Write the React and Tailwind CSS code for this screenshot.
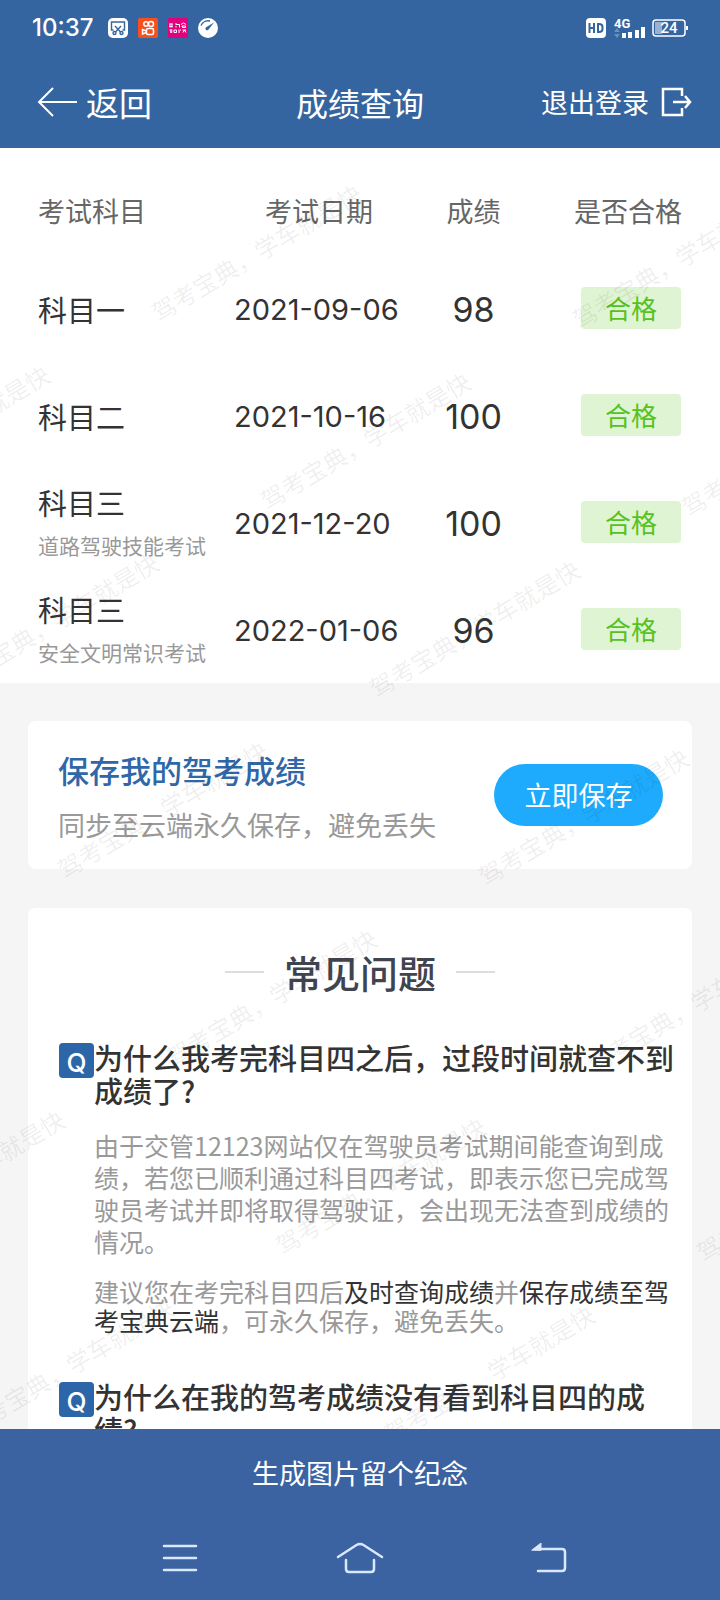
import React from 'react';

const RESULTS = [
  { subject: '科目一', date: '2021-09-06', score: 98 },
  { subject: '科目二', date: '2021-10-16', score: 100 },
  { subject: '科目三', note: '道路驾驶技能考试', date: '2021-12-20', score: 100 },
  { subject: '科目三', note: '安全文明常识考试', date: '2022-01-06', score: 96 },
];

// watermark grid: each row shifts right, each column drops a little
const WATERMARKS = [];
for (let row = 0; row < 7; row++) {
  for (let col = -2; col < 2; col++) {
    const left = 161 + row * 109 + col * 421;
    // skip the ones that would sit fully outside the screen
    if (left > -210 && left < 720) WATERMARKS.push({ left, top: 149 + row * 188 + col * 7 });
  }
}

export default function App() {
  return (
    <div className="flex h-screen flex-col overflow-hidden bg-[#f5f5f5] font-['Noto_Sans_CJK_SC',sans-serif] text-[#333]">
      <header className="shrink-0 bg-[#3565a0] text-white">
        <StatusBar />
        <div className="grid h-[92px] grid-cols-[1fr_auto_1fr] items-center px-7">
          <button type="button" className="ml-[9px] flex items-center gap-[9px] justify-self-start text-[33px] leading-[48px]">
            <svg width="40" height="30" viewBox="0 0 40 30" fill="none" stroke="currentColor" strokeWidth="2">
              <path d="M16 1 2 15l14 14M2 15h38" />
            </svg>
            返回
          </button>
          <h1 className="text-[32px] leading-[48px]">成绩查询</h1>
          <button type="button" className="flex items-center gap-[12px] justify-self-end text-[27px] leading-[48px]">
            退出登录
            <svg width="31" height="30" viewBox="0 0 31 30" fill="none" stroke="currentColor" strokeWidth="2.500">
              <path d="M21 9V2H2v26h19v-7M12 15h17M24 9l5 6-5 6" />
            </svg>
          </button>
        </div>
      </header>

      <main className="relative min-h-0 flex-1 overflow-x-hidden overflow-y-auto [scrollbar-width:none]">
        <ResultTable />
        <section className="mx-7 mt-[38px] flex h-[148px] items-center justify-between rounded-lg bg-white pr-[29px] pl-[30px]">
          <div className="pt-[3px]">
            <h2 className="text-[31px] leading-[55px] font-medium text-[#2f67a8]">保存我的驾考成绩</h2>
            <p className="text-[27px] leading-[55px] text-[#999]">同步至云端永久保存，避免丢失</p>
          </div>
          <button type="button" className="h-[62px] w-[169px] rounded-full bg-[#1eabfd] text-[27px] text-white">
            立即保存
          </button>
        </section>
        <Faq />
        <Watermark />
      </main>

      <footer className="shrink-0 bg-[#3b63a1] text-white">
        <button type="button" className="block h-[88px] w-full text-[27px]">
          生成图片留个纪念
        </button>
        <SystemNav />
      </footer>
    </div>
  );
}

function StatusBar() {
  return (
    <div className="flex h-14 items-center justify-between px-[32px]">
      <div className="flex items-center gap-[10px]">
        <span className="mr-[4px] font-['Inter',sans-serif] text-[24px] leading-8 font-medium">10:37</span>
        <svg width="20" height="20" viewBox="0 0 20 20">
          <rect width="20" height="20" rx="5" fill="#fff" />
          <g fill="none" stroke="#3565a0" strokeWidth="1.400">
            <path d="M5.500 12H3.500V4h13v8h-2" />
            <path d="m7 8 5.500 6M13 8l-5.500 6" />
            <circle cx="6.500" cy="15" r="1.500" />
            <circle cx="13.500" cy="15" r="1.500" />
          </g>
        </svg>
        <svg width="20" height="20" viewBox="0 0 20 20">
          <rect width="20" height="20" rx="2" fill="#f4511e" />
          <g fill="none" stroke="#fff" strokeWidth="1.500">
            <circle cx="8" cy="6" r="2.200" />
            <circle cx="13" cy="6" r="2.500" />
            <rect x="8.500" y="10.500" width="7" height="6" rx="1.500" />
            <path d="m8.500 13-4-1.500v4.500l4-1.500" />
          </g>
        </svg>
        <svg width="20" height="20" viewBox="0 0 20 20">
          <rect width="20" height="20" rx="1" fill="#e2007f" />
          <g fill="none" stroke="#fff" strokeWidth="1">
            <path d="M1.500 6h3M1.500 8.500h3M2 5.500v4M4 5.500v4M7.500 6.500h4v3M8 5v1M8 8v1.500M13 6.500l2.500-1.500L18 6.500M14 8h3.500v1.500h-3z" />
            <path d="M1.500 12h3M2 14h2.500M3 11.500V15M6 12h2.500v2.500H6zM11 11.500V15M12 12h1M14.500 12h3.500M15 14.500l1.500-2.500 1.500 2.500" />
          </g>
        </svg>
        <svg width="20" height="20" viewBox="0 0 20 20">
          <circle cx="10" cy="10" r="10" fill="#fff" />
          <path d="M3 7.500a8 8 0 0 1 9-4.500" fill="none" stroke="#3565a0" strokeWidth="1.400" />
          <path d="m16 4.500-7.500 4.500a1.700 1.700 0 1 0 2.200 2.200z" fill="#3565a0" />
        </svg>
      </div>

      <div className="flex items-center gap-[6px]">
        <svg width="20" height="20" viewBox="0 0 20 20">
          <rect width="20" height="20" rx="4" fill="#fff" />
          <path d="M3.500 5v10M8 5v10M3.500 10H8M12 6v8h1q3.500 0 3.500-3V9q0-3-3.500-3z" fill="none" stroke="#3565a0" strokeWidth="2" />
        </svg>
        <svg width="32" height="22" viewBox="0 0 32 22" className="ml-[2px]">
          <text x="0" y="11" fill="#fff" fontFamily="Roboto" fontWeight="700" fontSize="13">4G</text>
          <path d="m0 15 3-4 3 4zM0 17l3 4 3-4z" fill="#6a90c0" />
          <path d="M10 21v-5M16 21v-6M23 21v-8M29 21V10" stroke="#fff" strokeWidth="4" />
        </svg>
        <svg width="36" height="20" viewBox="0 0 36 20">
          <rect x="1" y="2" width="32" height="16" rx="3" fill="none" stroke="#fff" strokeWidth="1.500" />
          <rect x="3" y="4" width="7" height="12" fill="#fff" opacity="0.500" />
          <path d="M35 8v4" stroke="#fff" strokeWidth="2" />
          <text x="17" y="15" fill="#fff" textAnchor="middle" fontFamily="Roboto" fontWeight="500" fontSize="15">24</text>
        </svg>
      </div>
    </div>
  );
}

function ResultTable() {
  return (
    <table className="w-full table-fixed border-collapse bg-white">
      <thead>
        <tr className="h-[107px] text-[27px] leading-[40px] text-[#666]">
          <th className="pt-[18px] pl-[38px] text-left font-normal">考试科目</th>
          <th className="w-[200px] pt-[18px] font-normal">考试日期</th>
          <th className="w-[109px] pt-[18px] font-normal">成绩</th>
          <th className="w-[192px] pt-[18px] pr-[38px] text-right font-normal">是否合格</th>
        </tr>
      </thead>
      <tbody>
        {RESULTS.map((r) => (
          <tr key={r.date} className="h-[107px]">
            <td className="pl-[38px] whitespace-nowrap">
              <div className="text-[29px] leading-[44px]">{r.subject}</div>
              {r.note && <div className="text-[21px] leading-[42px] text-[#999]">{r.note}</div>}
            </td>
            <td className="pt-[2px] pl-[15px] font-['Inter',sans-serif] text-[29px] whitespace-nowrap">{r.date}</td>
            <td className="pt-[2px] text-center font-['Inter',sans-serif] text-[34px]">{r.score}</td>
            <td className="pr-[39px] pb-[2px]">
              <span className="ml-auto block w-[100px] rounded bg-[#dff4d2] text-center text-[26px] leading-[42px] text-[#56c222]">
                合格
              </span>
            </td>
          </tr>
        ))}
      </tbody>
    </table>
  );
}

function Faq() {
  return (
    <section className="mx-7 mt-[39px] rounded-lg bg-white pt-[34px] pr-[12px] pb-10 pl-[31px]">
      <div className="mr-[19px] mb-[39px] flex items-center justify-center gap-[20px]">
        <span className="h-[2px] w-[39px] bg-[#ddd]" />
        <h2 className="text-[38px] leading-[60px] font-medium text-[#40444f]">常见问题</h2>
        <span className="h-[2px] w-[39px] bg-[#ddd]" />
      </div>

      <Question title="为什么我考完科目四之后，过段时间就查不到成绩了?">
        <p className="mt-[22px] leading-[32px]">
          由于交管12123网站仅在驾驶员考试期间能查询到成绩，若您已顺利通过科目四考试，即表示您已完成驾驶员考试并即将取得驾驶证，会出现无法查到成绩的情况。
        </p>
        <p className="mt-[20px] leading-[29px]">
          建议您在考完科目四后<b className="font-normal text-[#333]">及时查询成绩</b>并
          <b className="font-normal text-[#333]">保存成绩至驾考宝典云端</b>，可永久保存，避免丢失。
        </p>
      </Question>
      <Question title="为什么在我的驾考成绩没有看到科目四的成绩?" />
    </section>
  );
}

function Question({ title, children }) {
  return (
    <div className="mb-[45px] flex items-start">
      <span className="mt-[2px] h-[35px] w-[35px] shrink-0 rounded bg-[#2c66a8] pt-[2px] text-center font-['Inter',sans-serif] text-[26px] leading-[35px] font-medium text-white">
        Q
      </span>
      <div className="flex-1 text-[25px] text-[#999]">
        <h3 className="text-[29px] leading-[33px] font-medium text-[#333]">{title}</h3>
        {children}
      </div>
    </div>
  );
}

function Watermark() {
  return (
    <div aria-hidden="true" className="pointer-events-none absolute inset-0 overflow-hidden select-none">
      {WATERMARKS.map((w, i) => (
        <span
          key={i}
          className="absolute origin-bottom-left -rotate-31 text-[24px] leading-[30px] whitespace-nowrap text-black/7"
          style={{ left: w.left, top: w.top }}
        >
          驾考宝典，学车就是快
        </span>
      ))}
    </div>
  );
}

function SystemNav() {
  return (
    <nav className="grid h-[83px] grid-cols-3 place-items-center px-[90px] pb-[2px] text-[#dbe6ff]">
      <button type="button" aria-label="菜单">
        <svg width="36" height="30" viewBox="0 0 36 30" stroke="currentColor" strokeWidth="2.500" strokeLinecap="round">
          <path d="M2 3h32M2 15h32M2 27h32" />
        </svg>
      </button>
      <button type="button" aria-label="主页">
        <svg width="48" height="32" viewBox="0 0 48 32" fill="none" stroke="currentColor" strokeWidth="2.500" strokeLinecap="round">
          <path d="M2 15 20.500 3q3.500-2 7 0L46 15M10 18v9q0 3 3 3h22q3 0 3-3v-9" />
        </svg>
      </button>
      <button type="button" aria-label="返回上一页" className="pl-[18px]">
        <svg width="36" height="30" viewBox="0 0 36 30" fill="none" stroke="currentColor" strokeWidth="2.500" strokeLinecap="round">
          <path d="M4 6h27q3 0 3 3v16q0 3-3 3H7" />
          <path d="M1 7 10 0v7z" fill="currentColor" strokeWidth="1" />
        </svg>
      </button>
    </nav>
  );
}
